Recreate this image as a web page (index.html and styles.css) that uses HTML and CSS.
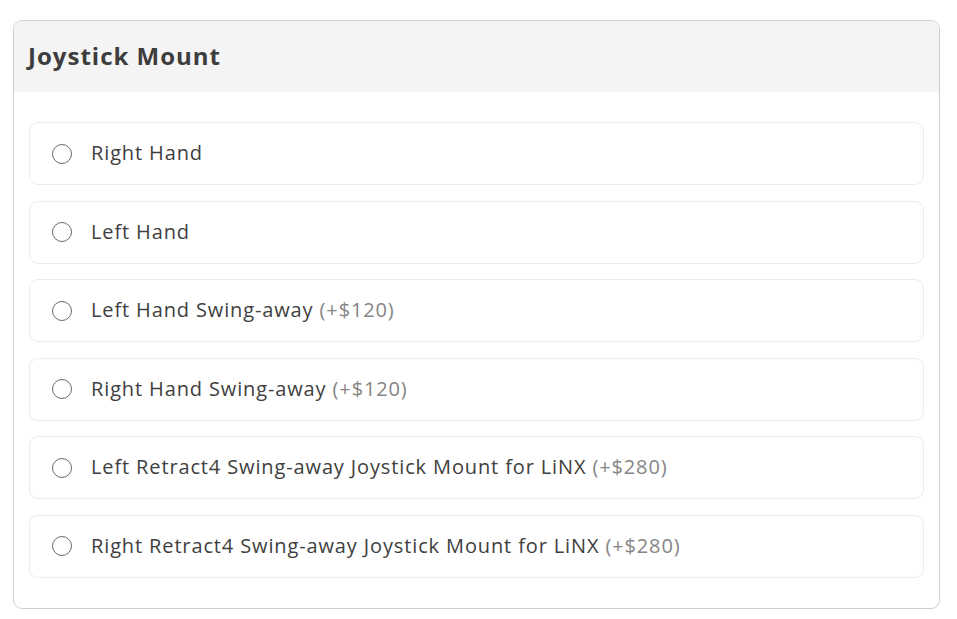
FILE: index.html
```html
<!DOCTYPE html>
<html lang="en">

<head>
    <meta charset="UTF-8">
    <meta name="viewport" content="width=device-width, initial-scale=1.0">
    <title>Joystick Mount</title>
    <link rel="stylesheet" href="styles.css">
</head>

<body>
    <div class="card">
        <div class="card-header">
            <h2>Joystick Mount</h2>
        </div>
        <div class="options">
            <label class="option">
                <input type="radio" name="mount" class="radio">
                <span class="label">Right Hand</span>
            </label>
            <label class="option">
                <input type="radio" name="mount" class="radio">
                <span class="label">Left Hand</span>
            </label>
            <label class="option">
                <input type="radio" name="mount" class="radio">
                <span class="label">Left Hand Swing-away <span class="price">(+$120)</span></span>
            </label>
            <label class="option">
                <input type="radio" name="mount" class="radio">
                <span class="label">Right Hand Swing-away <span class="price">(+$120)</span></span>
            </label>
            <label class="option">
                <input type="radio" name="mount" class="radio">
                <span class="label">Left Retract4 Swing-away Joystick Mount for LiNX <span class="price">(+$280)</span></span>
            </label>
            <label class="option">
                <input type="radio" name="mount" class="radio">
                <span class="label">Right Retract4 Swing-away Joystick Mount for LiNX <span class="price">(+$280)</span></span>
            </label>
        </div>
    </div>
</body>

</html>
```

FILE: styles.css
```css
* {
    box-sizing: border-box;
}

body {
    margin: 0;
    padding: 20px 17px 0 13px;
    background-color: #ffffff;
    color: #3a3a3a;
    font-family: "Open Sans", "Noto Sans", sans-serif;
}

.card {
    border: 1px solid #cfcfcf;
    border-radius: 9px;
    overflow: hidden;
}

.card-header {
    background-color: #f4f4f4;
    height: 71px;
    display: flex;
    align-items: center;
    padding: 0 14px;
}

.card-header h2 {
    margin: 0;
    font-size: 24px;
    font-weight: bold;
    color: #3d3d3d;
    letter-spacing: 1px;
    padding-bottom: 2px;
}

.options {
    display: flex;
    flex-direction: column;
    gap: 15.5px;
    padding: 30px 15px 30px 15px;
}

.option {
    display: flex;
    align-items: center;
    height: 63px;
    padding: 0 22px;
    border: 1px solid #ececec;
    border-radius: 9px;
    cursor: pointer;
}

.radio {
    appearance: none;
    -webkit-appearance: none;
    width: 20px;
    height: 20px;
    margin: 0 19px 0 0;
    border: 1.5px solid #6a6a6a;
    border-radius: 50%;
    flex-shrink: 0;
}

.radio:checked {
    background: radial-gradient(circle, #555 0 4px, transparent 5px);
}

.label {
    font-size: 20px;
    color: #404040;
    letter-spacing: 0.87px;
    padding-bottom: 2px;
}

.price {
    color: #858585;
}
```
